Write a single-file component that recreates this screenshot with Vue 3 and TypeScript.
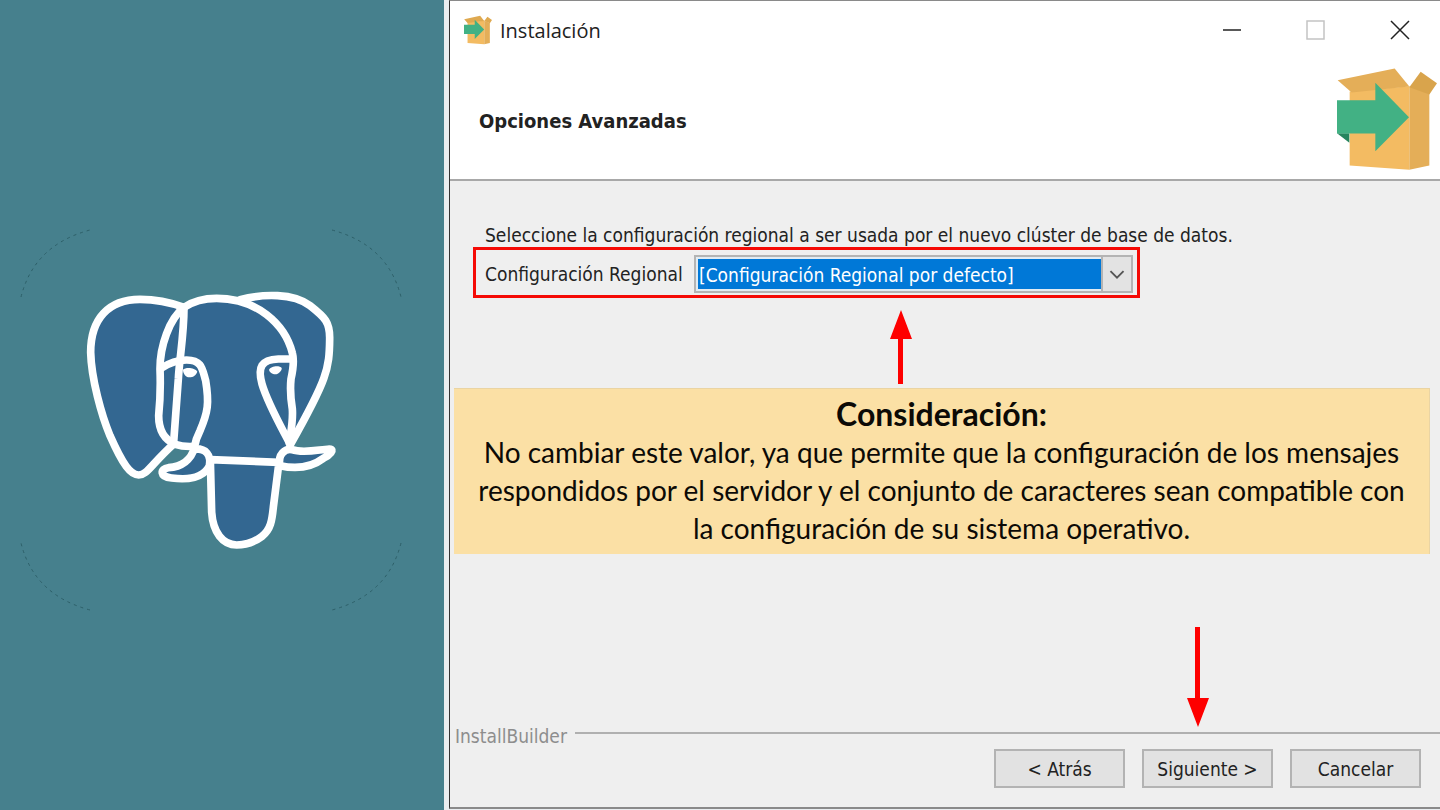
<script setup lang="ts">
import { ref } from 'vue'

const locale = ref<string>('default')
const noteLines: string[] = [
  'No cambiar este valor, ya que permite que la configuración de los mensajes',
  'respondidos por el servidor y el conjunto de caracteres sean compatible con',
  'la configuración de su sistema operativo.',
]
</script>

<template>
  <div class="slide">
    <aside class="brand">
      <svg class="logo" viewBox="0 0 382 382" role="img" aria-label="PostgreSQL">
        <g class="corners">
          <path d="M1 68Q14 16 70 1" />
          <path d="M312 1Q368 16 381 68" />
          <path d="M381 314Q368 366 312 381" />
          <path d="M70 381Q14 366 1 314" />
        </g>
        <g class="elephant" transform="translate(40 40) scale(.33333)">
          <path d="M540 92C610 74 700 72 750 110C796 146 810 160 809 210C808 300 802 330 692 525L640 430L600 150Z" />
          <path d="M372 115C320 96 280 91 240 91C145 91 92 150 92 250C94 330 125 440 150 500C190 590 212 618 236 618C262 618 272 587 343 523Z" />
          <path class="fill" d="M372 115C400 96 430 88 470 88C600 88 690 170 700 262L690 350L698 430L688 525L657 580L451 572L430 540L400 533L342 522C295 490 292 470 300 370C296 250 305 180 372 115Z" />
          <path class="line" d="M688 522C690 500 700 460 697 420C692 390 691 350 693 330C702 290 702 270 697 252C675 165 590 88 470 88C430 88 400 96 372 115C328 150 300 230 300 300C302 350 302 380 296 440C296 490 318 514 346 526Q370 534 402 532" />
          <path class="line" d="M372 115C372 200 358 270 355 330L341 520" />
          <path class="line" d="M303 298C330 280 350 273 380 273C426 273 427 300 437 335C448 402 444 430 420 485Q407 510 403 535" />
          <path class="line" d="M698 270H655C604 272 592 294 606 345C622 400 654 456 690 525" />
          <path d="M404 535C394 572 365 594 325 596C300 600 298 624 335 627C384 634 430 626 448 591C454 558 438 538 404 540Z" />
          <path d="M451 572L455 730C459 790 488 828 530 828C552 828 582 820 606 802C632 782 636 755 640 715L657 580Z" />
          <path d="M660 590C652 556 676 538 696 542C730 554 775 542 808 540C827 540 808 560 790 568C750 598 705 600 660 590Z" />
          <path class="eye" d="M369 302C376 294 405 295 412 308C408 320 396 326 388 325C377 324 369 314 369 302Z" />
          <path class="eye" d="M627 302C632 290 660 288 665 297C667 304 655 316 646 316C637 316 628 309 627 302Z" />
        </g>
      </svg>
    </aside>

    <main class="window">
      <header class="titlebar">
        <svg class="app-icon" viewBox="440 203 300 305" aria-hidden="true">
          <path fill="#f3bb62" d="M478 273L657 257V508L478 495Z" />
          <path fill="#e4ae58" d="M657 257L717 280V495L657 508Z" />
          <path fill="#dfa950" d="M442 239L613 204L657 258L478 280ZM691 214L740 248L717 282L657 260Z" />
          <path fill="#42b184" d="M440 299H555V247L656 350L555 452V399H440Z" />
        </svg>
        <span class="title">Instalación</span>
        <div class="controls">
          <button type="button" aria-label="Minimizar">
            <svg viewBox="0 0 20 20"><path d="M1 10H19" /></svg>
          </button>
          <button type="button" aria-label="Maximizar" disabled>
            <svg viewBox="0 0 20 20"><path d="M1 1H18V19H1Z" /></svg>
          </button>
          <button type="button" aria-label="Cerrar">
            <svg viewBox="0 0 20 20"><path d="M1 1L19 19M19 1L1 19" /></svg>
          </button>
        </div>
      </header>

      <section class="banner">
        <h1>Opciones Avanzadas</h1>
        <svg class="box" viewBox="440 203 300 305" aria-hidden="true">
          <path fill="#f3bb62" d="M478 273L657 257V508L478 495Z" />
          <path fill="#e4ae58" d="M657 257L717 280V495L657 508Z" />
          <path fill="#e4ae58" d="M442 239L613 204L657 258L484 276Z" />
          <path fill="#d9a44c" d="M691 214L740 248L717 282L657 260Z" />
          <path fill="#26855f" d="M440 398H477V427Z" />
          <path fill="#42b184" d="M440 299H555V247L656 350L555 452V399H440Z" />
        </svg>
      </section>

      <section class="content">
        <p class="prompt">Seleccione la configuración regional a ser usada por el nuevo clúster de base de datos.</p>
        <div class="field">
          <label for="locale">Configuración Regional</label>
          <div class="combo">
            <select id="locale" v-model="locale">
              <option value="default">[Configuración Regional por defecto]</option>
            </select>
            <svg class="chevron" viewBox="0 0 30 34" aria-hidden="true"><path d="M8 14L15 21L22 14" /></svg>
          </div>
        </div>
        <svg class="arrow up" viewBox="0 0 22 74" aria-hidden="true"><path d="M11 0L22 29H13V74H8V29H0Z" /></svg>
        <div class="note">
          <strong>Consideración:</strong>
          <span v-for="line in noteLines" :key="line">{{ line }}</span>
        </div>
        <svg class="arrow down" viewBox="0 0 22 100" aria-hidden="true"><path d="M11 100L22 71H13V0H8V71H0Z" /></svg>
      </section>

      <footer class="footer">
        <div class="divider"><span>InstallBuilder</span></div>
        <div class="actions">
          <button type="button">&lt; Atrás</button>
          <button type="button">Siguiente &gt;</button>
          <button type="button">Cancelar</button>
        </div>
      </footer>
    </main>
  </div>
</template>

<style>
body {
  margin: 0;
}
</style>

<style scoped>
.slide {
  display: grid;
  grid-template-columns: 37fr 83fr;
  min-height: 100vh;
  box-sizing: border-box;
  background: #e9edf0;
  color: #222;
  font-family: Tahoma, "DejaVu Sans Condensed", "Noto Sans", sans-serif;
  font-size: 19px;
}
.brand {
  display: flex;
  align-items: center;
  padding: 30px 42px 0 20px;
  background: #46808d;
}
.logo {
  width: 100%;
}
.corners path {
  fill: none;
  stroke: #2d5f68;
  stroke-width: 1;
  stroke-dasharray: 3 4;
}
.elephant path {
  fill: #336791;
  stroke: #fff;
  stroke-width: 23;
  stroke-linejoin: round;
  stroke-linecap: round;
}
.elephant .fill {
  stroke: none;
}
.elephant .line {
  fill: none;
}
.elephant .eye {
  fill: #fff;
  stroke: none;
}
.window {
  display: flex;
  flex-direction: column;
  min-width: 0;
  margin: 0 0 1px 5px;
  border: solid #8a8a8a;
  border-width: 1px 0 2px 1px;
  border-left-color: #333;
  background: #efefef;
}
.titlebar {
  display: flex;
  align-items: center;
  height: 59px;
  padding-left: 14px;
  background: #fff;
}
.app-icon {
  width: 28px;
  height: 30px;
  padding-bottom: 2px;
}
.title {
  margin-left: 8px;
  font-family: "Segoe UI", "Open Sans", sans-serif;
  font-size: 20px;
}
.controls {
  display: flex;
  gap: 44px;
  margin-left: auto;
  padding: 0 20px 2px 0;
}
.controls button {
  display: flex;
  width: 40px;
  height: 40px;
  padding: 10px;
  border: 0;
  background: none;
}
.controls svg {
  width: 20px;
  height: 20px;
  fill: none;
  stroke: #222;
  stroke-width: 1.5;
}
.controls button:disabled svg {
  stroke: #c4c4c4;
}
.banner {
  display: flex;
  align-items: center;
  justify-content: space-between;
  height: 119px;
  padding: 0 3px 0 29px;
  border-bottom: 2px solid #a8a8a8;
  background: #fff;
}
h1 {
  margin: 0;
  padding-top: 2px;
  font-size: 20px;
}
.box {
  width: 100px;
  height: 102px;
  padding-bottom: 2px;
}
.content {
  display: flex;
  flex: 1;
  flex-direction: column;
  padding: 42px 10px 0 4px;
}
.prompt {
  margin: 0 0 0 31px;
  line-height: 24px;
}
.field {
  display: flex;
  align-items: center;
  align-self: flex-start;
  gap: 8px;
  box-sizing: border-box;
  width: 667px;
  max-width: 100%;
  height: 51px;
  margin-left: 19px;
  padding: 2px 4px 0 9px;
  border: 3px solid #f50a05;
}
.field label {
  flex: none;
  width: 201px;
  white-space: nowrap;
}
.combo {
  position: relative;
  flex: 1;
  min-width: 0;
}
select {
  display: block;
  box-sizing: border-box;
  width: 100%;
  height: 38px;
  padding: 2px 0 0 3px;
  border: 2px solid #b4b4b4;
  border-radius: 0;
  outline: 2px solid #e2ecf3;
  outline-offset: -4px;
  appearance: none;
  background: #0078d7;
  color: #fff;
  font: inherit;
}
.chevron {
  position: absolute;
  top: 2px;
  right: 2px;
  width: 28px;
  height: 34px;
  border-left: 2px solid #b4b4b4;
  background: #e3e3e3;
  fill: none;
  stroke: #555;
  stroke-width: 2;
  pointer-events: none;
}
.arrow {
  width: 22px;
  fill: #fe0000;
}
.up {
  height: 74px;
  margin: 12px 0 4px 436px;
}
.down {
  align-self: flex-end;
  height: 100px;
  margin: 73px 221px -3px 0;
}
.note {
  display: flex;
  flex-direction: column;
  align-items: center;
  padding: 6px 0 7px;
  border: 1px solid #ead4a3;
  border-width: 1px 1px 0 0;
  background: #fbe0a5;
  color: #0c0a06;
  font-family: "Gill Sans MT", "Gill Sans", Lato, sans-serif;
  font-size: 28px;
  line-height: 38px;
  text-align: center;
}
.note strong {
  font-size: 32px;
}
.divider {
  display: flex;
  gap: 8px;
  padding-left: 5px;
  color: #8d8d8d;
  line-height: 24px;
}
.divider::after {
  flex: 1;
  height: 2px;
  margin-top: 8px;
  background: #b0b0b0;
  content: "";
}
.actions {
  display: flex;
  justify-content: flex-end;
  gap: 17px;
  padding: 1px 19px 19px;
}
.actions button {
  box-sizing: border-box;
  width: 131px;
  height: 39px;
  padding: 0;
  border: 2px solid #b3b3b3;
  background: #e2e2e2;
  color: #222;
  font: inherit;
}
</style>
